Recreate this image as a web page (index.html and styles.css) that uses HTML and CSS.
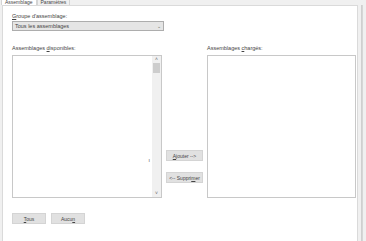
FILE: index.html
```html
<!DOCTYPE html>
<html lang="fr">
<head>
  <meta charset="UTF-8">
  <title>Assemblage</title>
  <link rel="stylesheet" href="styles.css">
</head>
<body>
  <div class="tabs">
    <div class="tab active">Assemblage</div>
    <div class="tab">Paramètres</div>
  </div>
  <div class="frame">
    <div class="panel">
      <label class="lbl"><u>G</u>roupe d'assemblage:</label>
      <div class="combo">
        <span>Tous les assemblages</span>
        <span class="combo-arrow">&#8964;</span>
      </div>

      <div class="lists">
        <div class="col">
          <label class="lbl">Assemblages <u>d</u>isponibles:</label>
          <div class="listbox">
            <div class="list-body"><span class="caret">ı</span></div>
            <div class="vscroll">
              <span class="arrow">&#708;</span>
              <div class="thumb"></div>
              <div class="track"></div>
              <span class="arrow">&#709;</span>
            </div>
          </div>
        </div>
        <div class="middle">
          <button class="btn"><u>A</u>jouter --&gt;</button>
          <button class="btn">&lt;-- Suppri<u>m</u>er</button>
        </div>
        <div class="col">
          <label class="lbl">Assemblages <u>c</u>hargés:</label>
          <div class="listbox"></div>
        </div>
      </div>

      <div class="bottom">
        <button class="btn small"><u>T</u>ous</button>
        <button class="btn small">Aucu<u>n</u></button>
      </div>
    </div>
    <div class="edge"></div>
  </div>
</body>
</html>
```

FILE: styles.css
```css
body {
  margin: 0;
  width: 366px;
  height: 241px;
  overflow: hidden;
  background: #f0f0f0;
  font-family: "Liberation Sans", Arial, sans-serif;
  font-size: 5.5px;
  color: #444;
}
u {
  text-decoration: underline;
}
.tabs {
  display: flex;
  height: 5px;
  overflow: hidden;
  padding-left: 1px;
}
.tab {
  font-size: 5px;
  line-height: 5px;
  padding: 0 3px;
  border: 1px solid #d4d4d4;
  border-top: none;
  border-bottom: none;
  background: #f0f0f0;
}
.tab.active {
  background: #fff;
}
.frame {
  display: flex;
  height: 236px;
}
.panel {
  width: 346px;
  margin-left: 2px;
  background: #fff;
  border: 1px solid #dadada;
  border-bottom: none;
  padding: 7px 0 0 9px;
}
.edge {
  flex: 1;
  margin-left: 3px;
  border-left: 1px solid #cfcfcf;
  border-right: 1px solid #d6d6d6;
  background: #f3f3f3;
  margin-right: 3px;
}
.lbl {
  display: block;
  height: 7px;
  line-height: 7px;
  color: #444;
}
.combo {
  display: flex;
  justify-content: space-between;
  align-items: center;
  width: 146px;
  height: 8px;
  margin-top: 1px;
  padding: 0 2px;
  background: #e5e5e5;
  border: 1px solid #adadad;
}
.combo-arrow {
  color: #666;
  font-size: 5px;
  line-height: 4px;
}
.lists {
  display: flex;
  margin-top: 14px;
}
.col {
  display: flex;
  flex-direction: column;
}
.col .lbl {
  margin-bottom: 3px;
}
.listbox {
  display: flex;
  width: 147px;
  height: 141px;
  border: 1px solid #c8c8c8;
  background: #fff;
}
.col:first-child .listbox {
  width: 148px;
}
.list-body {
  flex: 1;
  position: relative;
}
.caret {
  position: absolute;
  right: 2px;
  top: 101px;
  font-size: 5px;
  color: #444;
}
.vscroll {
  width: 9px;
  display: flex;
  flex-direction: column;
  align-items: center;
  background: #f0f0f0;
}
.arrow {
  font-size: 5px;
  line-height: 7px;
  color: #666;
}
.thumb {
  width: 7px;
  height: 10px;
  background: #cdcdcd;
}
.track {
  flex: 1;
}
.middle {
  width: 45px;
  display: flex;
  flex-direction: column;
  align-items: center;
  padding-top: 105px;
  gap: 11px;
}
.btn {
  width: 37px;
  height: 11px;
  padding: 0;
  border: 1px solid #d4d4d4;
  background: #e1e1e1;
  font-family: inherit;
  font-size: 5px;
  color: #444;
}
.bottom {
  display: flex;
  gap: 5px;
  margin-top: 15px;
}
.btn.small {
  width: 34px;
}
```
